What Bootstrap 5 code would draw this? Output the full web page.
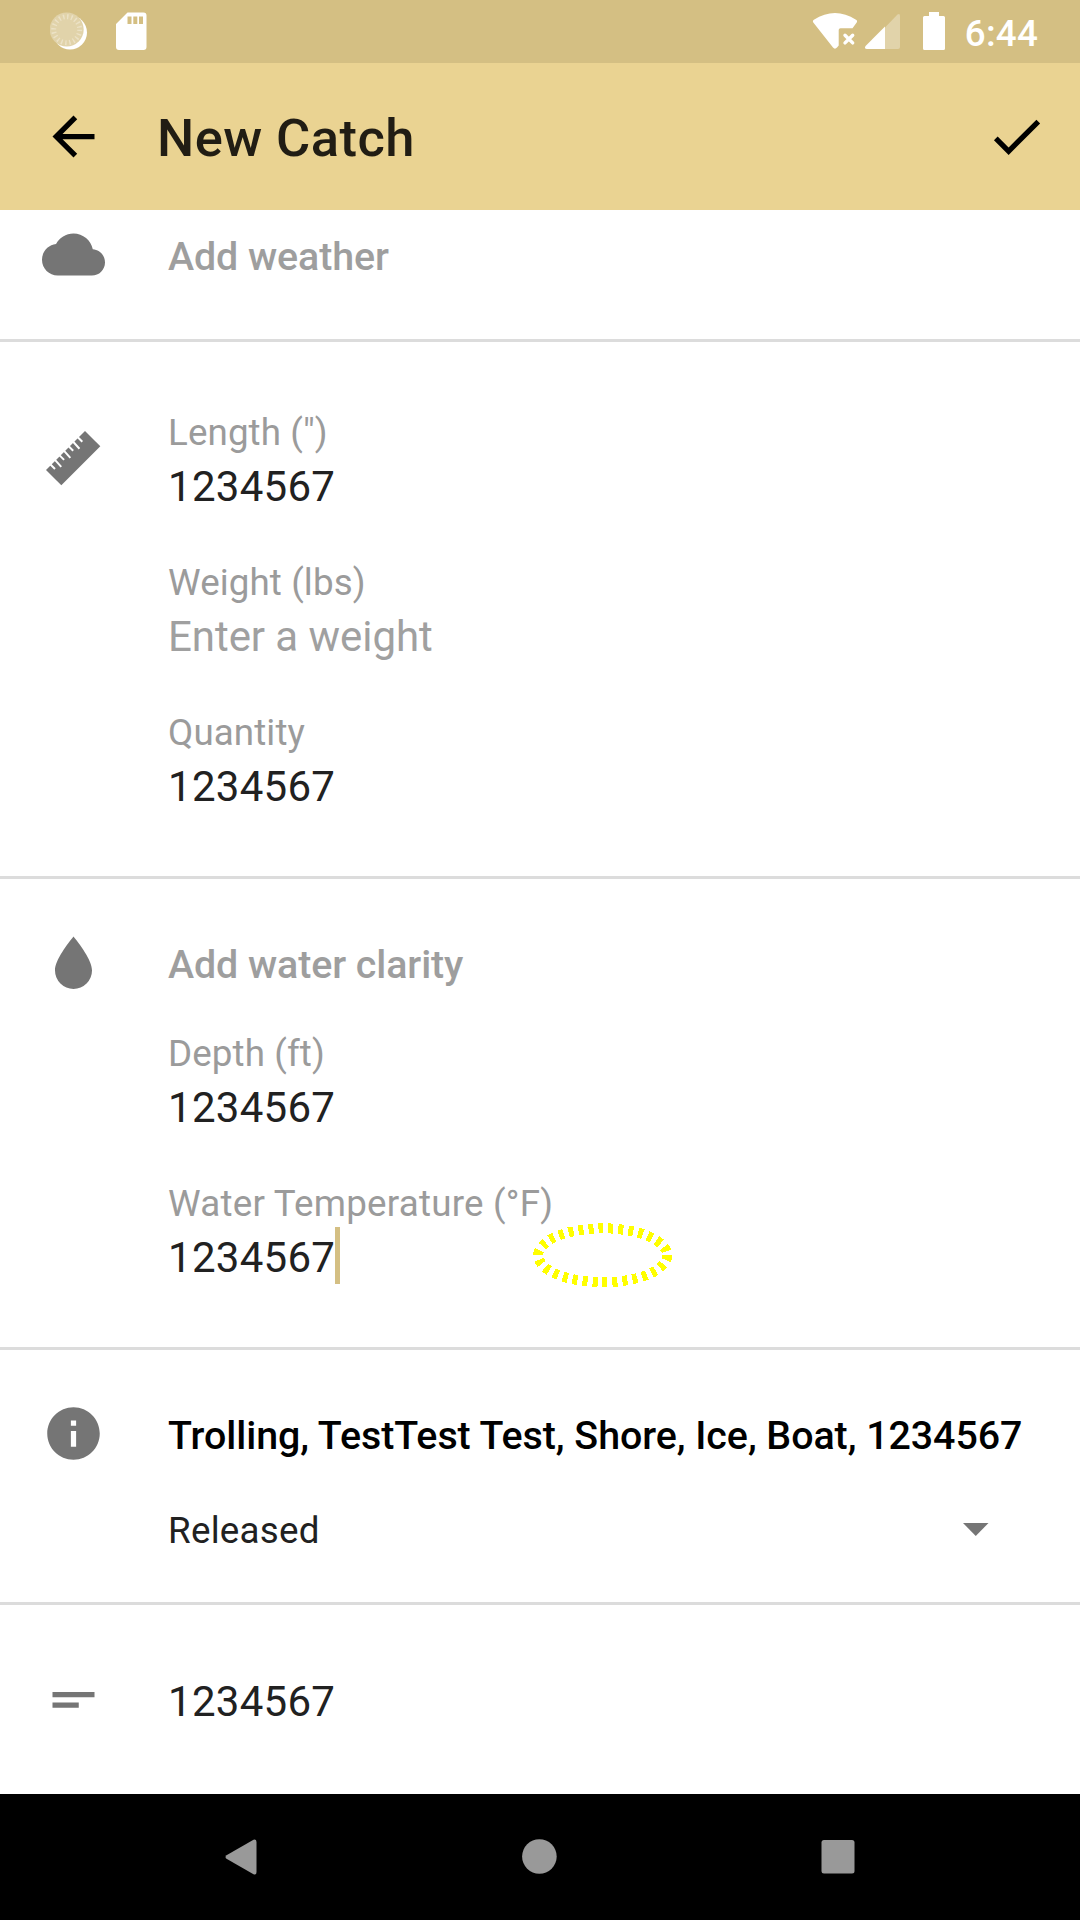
<!DOCTYPE html>
<html lang="en">
<head>
<meta charset="utf-8">
<meta name="viewport" content="width=device-width, initial-scale=1">
<title>New Catch</title>
<link href="https://cdn.jsdelivr.net/npm/bootstrap@5.3.0/dist/css/bootstrap.min.css" rel="stylesheet">
<style>
body{font-family:Roboto,"Liberation Sans",sans-serif;width:1080px;height:1920px;overflow:hidden;background:#fff;color:#212121}
svg{display:block;flex:none}
.statusbar{height:63px;background:#d4bf83;padding:0 42px 0 50px;color:#fff}
.clock{font-size:36.75px;line-height:63px;font-weight:500;padding-top:2px;margin-left:18px;letter-spacing:.2px}
.appbar{height:147px;background:#ead392;padding:0 32px 0 42px}
.apptitle{font-size:52.5px;line-height:64px;font-weight:500;color:#211d14;margin-left:52px;padding-top:3px;letter-spacing:.42px}
.form-sec{border-bottom:3px solid #dcdcdc}
.iconcol{width:168px;padding-left:42px;flex:none;color:#757575}
.icon-up{margin-top:-4px}
.icon-ruler{padding-top:19px}
.sec-weather{height:132px;padding-top:17px}
.sec-size{height:537px;padding-top:66px}
.sec-water{height:471px;padding-top:56px}
.sec-info{height:255px;padding-top:56px}
.sec-notes{height:189px;padding-top:68px;border-bottom:0}
.pick{font-size:39.375px;line-height:60px;font-weight:500;color:#9e9e9e;letter-spacing:-.08px}
.summary{letter-spacing:-.05px}
.lbl{font-size:36.75px;line-height:50px;color:#9b9b9b;letter-spacing:.1px}
.lbl-temp{letter-spacing:.22px}
.val{font-size:42px;line-height:58px;letter-spacing:.28px}
.hint{color:#a0a0a0;letter-spacing:-.06px}
.fields{gap:42px}
.fields-water{margin-top:34px}
.caret-bar{width:5px;height:57px;background:#d4bf83;margin-top:-2px}
.released{font-size:36.75px;line-height:50px;margin-top:40px;padding-right:91px;letter-spacing:.25px}
.released svg{margin-top:17px}
.marker{position:absolute;left:525px;top:1215px}
.softkeys{height:126px;background:#000;padding:45px 225px 0}
</style>
<script src="https://cdn.jsdelivr.net/npm/bootstrap@5.3.0/dist/js/bootstrap.bundle.min.js"></script>
</head>
<body class="position-relative">
<header>
<div class="statusbar d-flex align-items-start">
  <svg width="98" height="63" viewBox="50 0 98 63">
    <circle cx="70" cy="32.500" r="17" fill="#fff"/>
    <circle cx="66.700" cy="29.500" r="17" fill="#e1d3aa"/>
    <circle cx="66.700" cy="29.700" r="13" fill="none" stroke="#ece2c6" stroke-width="5" stroke-dasharray="1.400 2.684"/>
    <path fill="#fff" fill-rule="evenodd" d="M127.500 12.500H143.500a3 3 0 0 1 3 3V47a3 3 0 0 1-3 3H119a3 3 0 0 1-3-3V24zM127.500 16.500V24h4V16.500zM133.300 16.500V24h4V16.500zM139 16.500V24h4V16.500z"/>
  </svg>
  <svg class="ms-auto" width="135" height="63" viewBox="812 0 135 63">
    <path fill="#fff" d="M813.300 22.500C812.600 21.500 812.900 20.400 813.900 19.700C828 10.800 842 10.800 856 19.700C857.200 20.400 857.400 21.500 856.700 22.500L852.500 28.200H840.500Q838.700 28.200 838.700 30V45.500L837 47.600C835.700 49.100 834.200 49.100 833 47.600z"/>
    <path stroke="#fff" stroke-width="3.400" stroke-linecap="round" d="M845 35.200l7.700 7.700M852.700 35.200l-7.700 7.700"/>
    <path fill="#e1d3aa" d="M885 27.500L897.500 14.600Q900 13 900 16V47q0 2-2 2H885z"/>
    <path fill="#fff" d="M885 26.500V49H867q-3.400-.5-1.200-3.300z"/>
    <path fill="#fff" d="M929 12h10v4h4.500q1.500 0 1.500 1.500V48.500q0 1.500-1.500 1.500H924.500q-1.500 0-1.500-1.500V17.500q0-1.500 1.500-1.500H929z"/>
  </svg>
  <span class="clock">6:44</span>
</div>
<nav class="appbar d-flex align-items-center">
  <svg width="63" height="63" viewBox="0 0 24 24"><path d="M20 11H7.830l5.590-5.590L12 4l-8 8 8 8 1.410-1.410L7.830 13H20v-2z"/></svg>
  <h1 class="apptitle mb-0">New Catch</h1>
  <svg class="ms-auto" width="63" height="63" viewBox="0 0 24 24"><path d="M9 16.170L4.830 12l-1.420 1.410L9 19 21 7l-1.410-1.410z"/></svg>
</nav>
</header>
<main>
<section class="form-sec sec-weather d-flex">
  <div class="iconcol icon-up"><svg width="63" height="63" viewBox="0 0 24 24" fill="currentColor"><path d="M19.350 10.040C18.670 6.590 15.640 4 12 4 9.110 4 6.600 5.640 5.350 8.040 2.340 8.360 0 10.910 0 14c0 3.310 2.690 6 6 6h13c2.760 0 5-2.240 5-5 0-2.640-2.050-4.780-4.650-4.960z"/></svg></div>
  <div class="pick">Add weather</div>
</section>
<section class="form-sec sec-size d-flex">
  <div class="iconcol icon-ruler"><svg width="63" height="63" viewBox="42 427 63 63"><path fill="#757575" d="M46 470L85 431 100.300 446.300 61.300 485.300z"/><path stroke="#fff" stroke-width="2" d="M50 464l5 5M54.550 459.450l6.700 7.500M59.100 454.900l5 5M63.650 450.350l6.700 7.500M68.200 445.800l5 5M72.750 441.250l6.700 7.500M77.300 436.700l5 5"/></svg></div>
  <div class="fields d-flex flex-column">
    <div><div class="lbl">Length (")</div><div class="val">1234567</div></div>
    <div><div class="lbl">Weight (lbs)</div><div class="val hint">Enter a weight</div></div>
    <div><div class="lbl">Quantity</div><div class="val">1234567</div></div>
  </div>
</section>
<section class="form-sec sec-water d-flex">
  <div class="iconcol"><svg width="63" height="63" viewBox="42 935 63 63" fill="currentColor"><path d="M73.500 936.500C79 943.500 92 960 92 970.500a18.500 18.500 0 0 1-37 0C55 960 68 943.500 73.500 936.500z"/></svg></div>
  <div>
    <div class="pick">Add water clarity</div>
    <div class="fields fields-water d-flex flex-column">
      <div><div class="lbl">Depth (ft)</div><div class="val">1234567</div></div>
      <div><div class="lbl lbl-temp">Water Temperature (°F)</div><div class="val d-flex"><span>1234567</span><span class="caret-bar"></span></div></div>
    </div>
  </div>
</section>
<section class="form-sec sec-info d-flex">
  <div class="iconcol icon-up"><svg width="63" height="63" viewBox="0 0 24 24" fill="currentColor"><path d="M12 2C6.480 2 2 6.480 2 12s4.480 10 10 10 10-4.480 10-10S17.520 2 12 2zm1 15h-2v-6h2v6zm0-8h-2V7h2v2z"/></svg></div>
  <div class="flex-grow-1">
    <div class="pick summary text-black text-nowrap">Trolling, TestTest Test, Shore, Ice, Boat, 1234567</div>
    <div class="released d-flex justify-content-between">Released
      <svg width="26" height="13" viewBox="0 0 26 13"><path fill="#757575" d="M0 0h25.500L12.750 13z"/></svg>
    </div>
  </div>
</section>
<section class="form-sec sec-notes d-flex">
  <div class="iconcol icon-up"><svg width="63" height="63" viewBox="0 0 24 24" fill="currentColor"><path d="M4 8.800h16v2H4zM4 12.800h10v2H4z"/></svg></div>
  <div class="val">1234567</div>
</section>
</main>
<footer class="softkeys d-flex justify-content-between">
  <svg width="32" height="36" viewBox="0 0 32 36"><path fill="#999" d="M1.500 16.200L28.500.7Q31.500-.5 31.500 3V33q0 3.500-3 2.300L1.500 19.800Q-.5 18 1.500 16.200z"/></svg>
  <svg width="36" height="36" viewBox="0 0 36 36"><circle cx="18.400" cy="17.500" r="17.300" fill="#999"/></svg>
  <svg width="34" height="36" viewBox="0 0 34 36"><rect x=".5" y="1" width="33" height="33.500" rx="2.500" fill="#999"/></svg>
</footer>
<svg class="marker" width="155" height="80" viewBox="525 1215 155 80"><ellipse cx="602.700" cy="1255.300" rx="64.500" ry="27" fill="none" stroke="#ff0" stroke-width="10" stroke-dasharray="5" shape-rendering="crispEdges"/></svg>
</body>
</html>
